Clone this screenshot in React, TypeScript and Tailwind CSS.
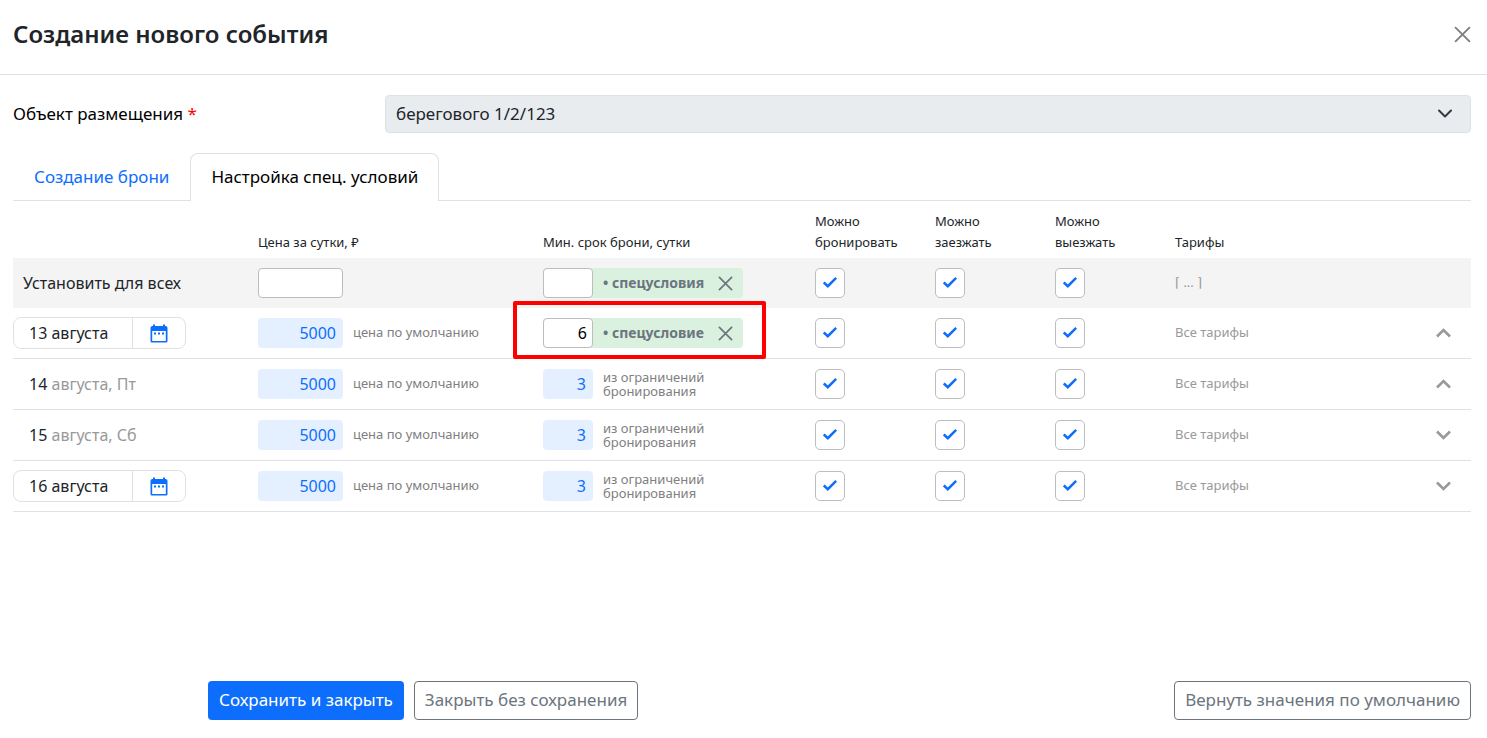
import React from "react";

type Day = {
  id: string;
  day: string;
  rest: string;
  picker: boolean;
  special: boolean;
  nights: string;
  open: boolean;
};

const days: Day[] = [
  { id: "d13", day: "13", rest: "августа", picker: true, special: true, nights: "6", open: true },
  { id: "d14", day: "14", rest: "августа, Пт", picker: false, special: false, nights: "3", open: true },
  { id: "d15", day: "15", rest: "августа, Сб", picker: false, special: false, nights: "3", open: false },
  { id: "d16", day: "16", rest: "августа", picker: true, special: false, nights: "3", open: false },
];

const flags = ["Можно бронировать", "Можно заезжать", "Можно выезжать"];

const CrossIcon = ({ size }: { size: number }) => (
  <svg width={size} height={size} viewBox="0 0 16 16" fill="none" stroke="currentColor" strokeWidth="1.8">
    <path d="M1 1L15 15M15 1L1 15" />
  </svg>
);

const CalendarIcon = () => (
  <svg width="18" height="19" viewBox="0 0 18 19" fill="#0d6efd">
    <path
      fillRule="evenodd"
      d="M3 0.500H5V2H13V0.500H15V2H16A2 2 0 0 1 17.500 4V17A1.500 1.500 0 0 1 16 18.500H2A1.500 1.500 0 0 1 0.500 17V4A2 2 0 0 1 2 2H3ZM2.200 7V17H15.800V7Z"
    />
    <path d="M4 8.500H6V10.500H4ZM8 8.500H10V10.500H8ZM12 8.500H14V10.500H12Z" />
  </svg>
);

const Check = ({ label }: { label: string }) => (
  <div className="relative size-[30px]">
    <input
      type="checkbox"
      aria-label={label}
      defaultChecked
      className="peer block size-[30px] appearance-none rounded-[5px] border border-[#bdbdbd] bg-white"
    />
    <svg
      className="pointer-events-none absolute top-[9px] left-2 hidden peer-checked:block"
      width="14"
      height="11"
      viewBox="0 0 14 11"
      fill="none"
      stroke="#0d6efd"
      strokeWidth="2.5"
    >
      <path d="M0.800 5.500L4.800 9.200L13.200 0.900" />
    </svg>
  </div>
);

const SpecialNights = ({ value, text }: { value: string; text: string }) => (
  <div className="flex h-[30px] w-[200px] items-center rounded bg-[#daf1e0]">
    <input
      aria-label="Мин. срок брони"
      defaultValue={value}
      className="h-[30px] w-[50px] rounded border border-[#bdbdbd] bg-white px-[5px] text-right text-base text-black"
    />
    <span className="flex-1 pl-[10px] text-sm font-bold whitespace-nowrap text-[#6c757d]">• {text}</span>
    <button aria-label="Сбросить" className="mr-[10px] text-[#6c757d]">
      <CrossIcon size={15} />
    </button>
  </div>
);

const DayRow = ({ row }: { row: Day }) => (
  <tr className="h-[51px] *:border-b *:border-[#dee2e6]">
    <td>
      {row.picker ? (
        <div className="flex h-8 w-[173px] items-center rounded-[8px] border border-[#dee2e6] text-[#212529]">
          <input
            aria-label="Дата"
            defaultValue={row.day + " " + row.rest}
            className="h-full w-[119px] border-r border-[#dee2e6] pl-[15px] text-base"
          />
          <button aria-label="Выбрать дату" className="flex flex-1 justify-center">
            <CalendarIcon />
          </button>
        </div>
      ) : (
        <span className="pl-4 text-[#999]">
          <span className="text-[#212529]">{row.day}</span> {row.rest}
        </span>
      )}
    </td>
    <td>
      <label className="flex items-center gap-[10px] text-[13px] text-[#808080]">
        <input
          defaultValue="5000"
          className="h-[30px] w-[85px] rounded bg-[#e4f0ff] px-[7px] text-right text-base text-[#0d6efd]"
        />
        цена по умолчанию
      </label>
    </td>
    <td className="relative">
      {row.special ? (
        <>
          <SpecialNights value={row.nights} text="спецусловие" />
          <div className="pointer-events-none absolute -top-[7px] -left-[30px] h-[58px] w-[253px] rounded-[2px] border-4 border-[#ff0000]" />
        </>
      ) : (
        <label className="flex items-center gap-[10px] text-[13px] leading-[14px] text-[#808080]">
          <input
            defaultValue={row.nights}
            className="h-[30px] w-[50px] rounded bg-[#e4f0ff] px-[7px] text-right text-base text-[#0d6efd]"
          />
          <span>
            из ограничений
            <br />
            бронирования
          </span>
        </label>
      )}
    </td>
    {flags.map((flag) => (
      <td key={flag}>
        <Check label={flag} />
      </td>
    ))}
    <td>
      <div className="flex items-center justify-between pr-5 text-[13px] text-[#999]">
        Все тарифы
        <button aria-label="Тарифы">
          <svg width="15" height="10" viewBox="0 0 15 10" fill="none" stroke="#999" strokeWidth="2.6">
            <path d={row.open ? "M1 8.500L7.500 2L14 8.500" : "M1 1.500L7.500 8L14 1.500"} />
          </svg>
        </button>
      </div>
    </td>
  </tr>
);

const App = () => {
  return (
    <div className="flex min-h-screen flex-col bg-white font-['Noto_Sans',sans-serif] text-[#212529]">
      <header className="flex h-[75px] items-center justify-between border-b border-[#dee2e6] pr-4 pb-[6px] pl-[13px]">
        <h1 className="text-2xl font-semibold">Создание нового события</h1>
        <button aria-label="Закрыть" className="text-[#808080]">
          <CrossIcon size={17} />
        </button>
      </header>

      <main className="pt-5 pr-4 pl-[13px]">
        <div className="flex items-center">
          <label htmlFor="place" className="w-[372px] text-[17px] text-black">
            Объект размещения <span className="text-[#ff0000]">*</span>
          </label>
          <div className="relative flex-1">
            <select
              id="place"
              className="block h-[38px] w-full appearance-none rounded border border-[#dee2e6] bg-[#e9ecef] px-[10px] text-[17px] text-[#212529]"
            >
              <option>берегового 1/2/123</option>
            </select>
            <svg
              className="pointer-events-none absolute top-[14px] right-[19px]"
              width="14"
              height="9"
              viewBox="0 0 14 9"
              fill="none"
              stroke="#343a40"
              strokeWidth="2"
              strokeLinecap="round"
              strokeLinejoin="round"
            >
              <path d="M1 1.500L7 7.500L13 1.500" />
            </svg>
          </div>
        </div>

        <nav className="mt-5 flex h-12 border-b border-[#dee2e6] text-[17px]">
          <button className="px-[21px] text-[#0d6efd]">Создание брони</button>
          <button className="-mb-px rounded-t-[8px] border border-b-0 border-[#dee2e6] bg-white px-5 pb-[2px] text-black">
            Настройка спец. условий
          </button>
        </nav>

        <table className="w-full table-fixed border-separate border-spacing-0 text-left *:*:*:p-0">
          <colgroup>
            <col className="w-[245px]" />
            <col className="w-[285px]" />
            <col className="w-[272px]" />
            <col className="w-[120px]" />
            <col className="w-[120px]" />
            <col className="w-[120px]" />
            <col />
          </colgroup>
          <thead>
            <tr className="h-[57px] align-bottom text-[13px] leading-[21px] *:font-normal">
              <td />
              <th>
                <div className="pb-[5px]">Цена за сутки, ₽</div>
              </th>
              <th>
                <div className="pb-[5px]">Мин. срок брони, сутки</div>
              </th>
              {flags.map((flag) => (
                <th key={flag}>
                  <div className="w-[90px] pb-[5px]">{flag}</div>
                </th>
              ))}
              <th>
                <div className="pb-[5px]">Тарифы</div>
              </th>
            </tr>
          </thead>
          <tbody>
            <tr className="h-[50px] bg-[#f4f4f4]">
              <td>
                <label htmlFor="all-price" className="pl-[10px]">
                  Установить для всех
                </label>
              </td>
              <td>
                <input
                  id="all-price"
                  className="block h-[30px] w-[85px] rounded border border-[#bdbdbd] bg-white px-[6px] text-right"
                />
              </td>
              <td>
                <SpecialNights value="" text="спецусловия" />
              </td>
              {flags.map((flag) => (
                <td key={flag}>
                  <Check label={flag} />
                </td>
              ))}
              <td className="text-[13px] text-[#999]">⌈ ... ⌉</td>
            </tr>
            {days.map((row) => (
              <DayRow key={row.id} row={row} />
            ))}
          </tbody>
        </table>
      </main>

      <footer className="mt-auto flex justify-between pt-6 pr-4 pb-[18px] pl-[208px] text-[17px]">
        <div className="flex gap-[10px]">
          <button className="h-[39px] rounded bg-[#0d6efd] px-[11px] pb-[2px] text-white">Сохранить и закрыть</button>
          <button className="h-[39px] rounded border border-[#6c757d] px-[10px] pb-[2px] text-[#6c757d]">
            Закрыть без сохранения
          </button>
        </div>
        <button className="h-[39px] rounded border border-[#6c757d] px-[10px] pb-[2px] text-[#6c757d]">
          Вернуть значения по умолчанию
        </button>
      </footer>
    </div>
  );
};

export default App;
